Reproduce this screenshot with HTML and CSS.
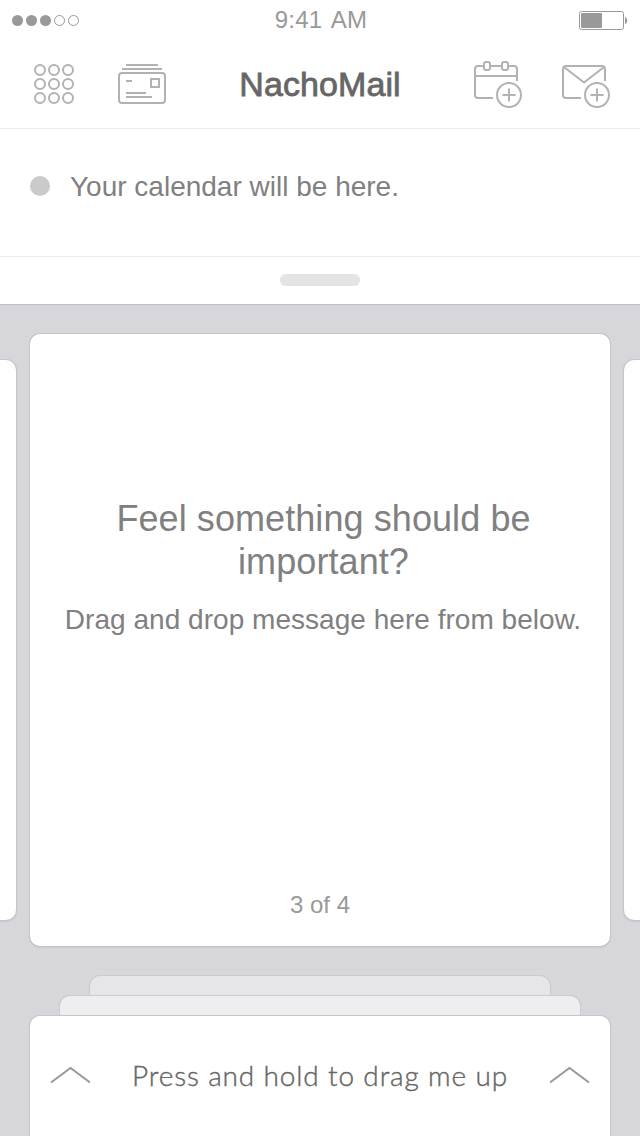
FILE: index.html
```html
<!DOCTYPE html>
<html lang="en">
<head>
<meta charset="utf-8">
<title>NachoMail</title>
<link rel="stylesheet" href="styles.css">
</head>
<body>
<div class="app">
  <div class="status">
    <svg class="signal" width="80" height="40" viewBox="0 0 80 40"><g fill="#999"><circle cx="17.5" cy="20.5" r="5.5"/><circle cx="31.5" cy="20.5" r="5.5"/><circle cx="45.5" cy="20.5" r="5.5"/></g><g fill="none" stroke="#999"><circle cx="59.5" cy="20.5" r="5"/><circle cx="73.5" cy="20.5" r="5"/></g></svg>
    <span class="time">9:41 AM</span>
    <svg class="battery" width="61" height="40" viewBox="0 0 61 40"><rect x=".5" y="11.5" width="44" height="18" rx="2" fill="none" stroke="#999"/><rect x="2" y="13" width="21" height="15" rx="1" fill="#999"/><path d="M46 17c3 1 3 6 0 7z" fill="#999"/></svg>
  </div>
  <header class="nav">
    <svg class="icon menu" width="41" height="48" viewBox="34 60 41 48"><circle cx="40" cy="70" r="5"/><circle cx="54" cy="70" r="5"/><circle cx="68" cy="70" r="5"/><circle cx="40" cy="84" r="5"/><circle cx="54" cy="84" r="5"/><circle cx="68" cy="84" r="5"/><circle cx="40" cy="98" r="5"/><circle cx="54" cy="98" r="5"/><circle cx="68" cy="98" r="5"/></svg>
    <svg class="icon cards" width="48" height="48" viewBox="118 60 48 48"><path d="M126 65h32M122 69h40M126 81h6M126 93h20M126 97h26"/><rect x="119" y="73" width="46" height="30" rx="3"/><rect x="151" y="79" width="8" height="8"/></svg>
    <h1 class="title">NachoMail</h1>
    <svg class="icon" width="50" height="50" viewBox="473 59 50 50"><path d="M484 66h-6q-3 0-3 3v26q0 3 3 3h15M490 66h12M508 66h6q3 0 3 3v12M475 76h42M509 88.500v13M502.500 95h13"/><rect x="484" y="62" width="6" height="8" rx="2"/><rect x="502" y="62" width="6" height="8" rx="2"/><circle cx="509" cy="95" r="12"/></svg>
    <svg class="icon compose" width="50" height="50" viewBox="561 59 50 50"><path d="M581 98h-15q-3 0-3-3v-26q0-3 3-3h36q3 0 3 3v12M564 67l20 15.500 20-15.500M597 88.500v13M590.500 95h13"/><circle cx="597" cy="95" r="12"/></svg>
  </header>
  <section class="calendar"><span class="dot"></span><span class="event">Your calendar will be here.</span></section>
  <div class="grip"><span class="handle"></span></div>
  <main class="board">
    <div class="carousel">
      <div class="card side left"></div>
      <article class="card current">
        <div class="message">
          <h2 class="question">Feel something should be<br>important?</h2>
          <p class="hint">Drag and drop message here from below.</p>
        </div>
        <span class="count">3 of 4</span>
      </article>
      <div class="card side right"></div>
    </div>
    <div class="stack">
      <div class="sheet back"></div>
      <div class="sheet middle"></div>
      <div class="sheet front">
        <svg class="chevron" width="40" height="18" viewBox="0 0 40 18"><path d="M1 16.500 20.500 2 40 16.500"/></svg>
        <span class="press">Press and hold to drag me up</span>
        <svg class="chevron" width="40" height="18" viewBox="0 0 40 18"><path d="M0 16.500 19.500 2 39 16.500"/></svg>
      </div>
    </div>
  </main>
</div>
</body>
</html>
```
FILE: styles.css
```css
* { box-sizing: border-box; }
body { margin: 0; font-family: "Liberation Sans", Arial, sans-serif; color: #808080; }
svg { display: block; flex: none; }
h1, h2, p { margin: 0; font-weight: 400; }
.app { width: 640px; height: 1136px; display: flex; flex-direction: column; overflow: hidden; background: #fff; }
.status { height: 40px; display: grid; grid-template-columns: 80px 1fr 61px; }
.time { font-size: 24px; line-height: 40px; color: #999; text-align: center; padding-right: 17px; word-spacing: 3px; letter-spacing: .2px; }
.nav { height: 89px; display: grid; grid-template-columns: 41px 43px 48px 307px 50px 38px 50px; padding: 19px 29px 0 34px; border-bottom: 1px solid #ececec; align-items: start; }
.icon { fill: none; stroke: #b2b2b2; stroke-width: 2; }
.menu, .cards { margin-top: 1px; }
.cards { grid-column: 3; }
.title { grid-column: 4; font-size: 34px; line-height: 50px; color: #666; text-align: center; letter-spacing: .1px; padding-left: 1px; -webkit-text-stroke: .8px #666; white-space: nowrap; }
.compose { grid-column: 7; }
.calendar { height: 128px; display: flex; align-items: center; padding: 0 30px 13px; border-bottom: 1px solid #ececec; gap: 20px; }
.dot { width: 20px; height: 20px; border-radius: 50%; background: #cacaca; }
.event, .hint { font-size: 28px; line-height: 34px; white-space: nowrap; }
.event { padding-top: 2px; }
.grip { height: 48px; display: flex; justify-content: center; padding-top: 17px; border-bottom: 1px solid #bfbec4; }
.handle { width: 80px; height: 12px; border-radius: 6px; background: #e4e4e4; }
.board { flex: 1; background: #d7d6db; padding-top: 29px; }
.carousel { display: grid; grid-template-columns: 16px 580px 16px; justify-content: space-between; align-items: center; height: 612px; }
.card { background: #fff; border-radius: 10px; box-shadow: 0 0 0 1px #c6c5ca, 0 1px 2px #aaaab0; }
.side { height: 560px; }
.left { border-radius: 0 10px 10px 0; }
.right { border-radius: 10px 0 0 10px; }
.current { height: 612px; display: flex; flex-direction: column; justify-content: space-between; align-items: center; padding: 163px 0 26px; }
.message { display: flex; flex-direction: column; align-items: center; gap: 20px; }
.question { font-size: 36px; line-height: 43px; text-align: center; white-space: nowrap; padding-left: 7px; letter-spacing: .08px; }
.hint { padding-left: 6px; letter-spacing: .03px; }
.count { font-size: 24px; line-height: 30px; color: #999; }
.stack { margin-top: 30px; display: flex; flex-direction: column; align-items: center; }
.sheet { border-radius: 10px 10px 0 0; box-shadow: 0 0 0 1px #cbcacf; }
.back { width: 460px; height: 20px; background: #e6e6e8; }
.middle { width: 520px; height: 20px; background: #eeeef0; }
.front { width: 580px; height: 120px; background: #fff; display: flex; align-items: center; justify-content: space-between; padding: 0 20px 2px; box-shadow: 0 0 0 1px #c6c5ca; }
.chevron { fill: none; stroke: #999; stroke-width: 2; }
.press { font-family: Lato, "Open Sans", sans-serif; font-weight: 300; font-size: 28px; line-height: 34px; color: #666; letter-spacing: .85px; white-space: nowrap; -webkit-text-stroke: .4px #666; }
```
